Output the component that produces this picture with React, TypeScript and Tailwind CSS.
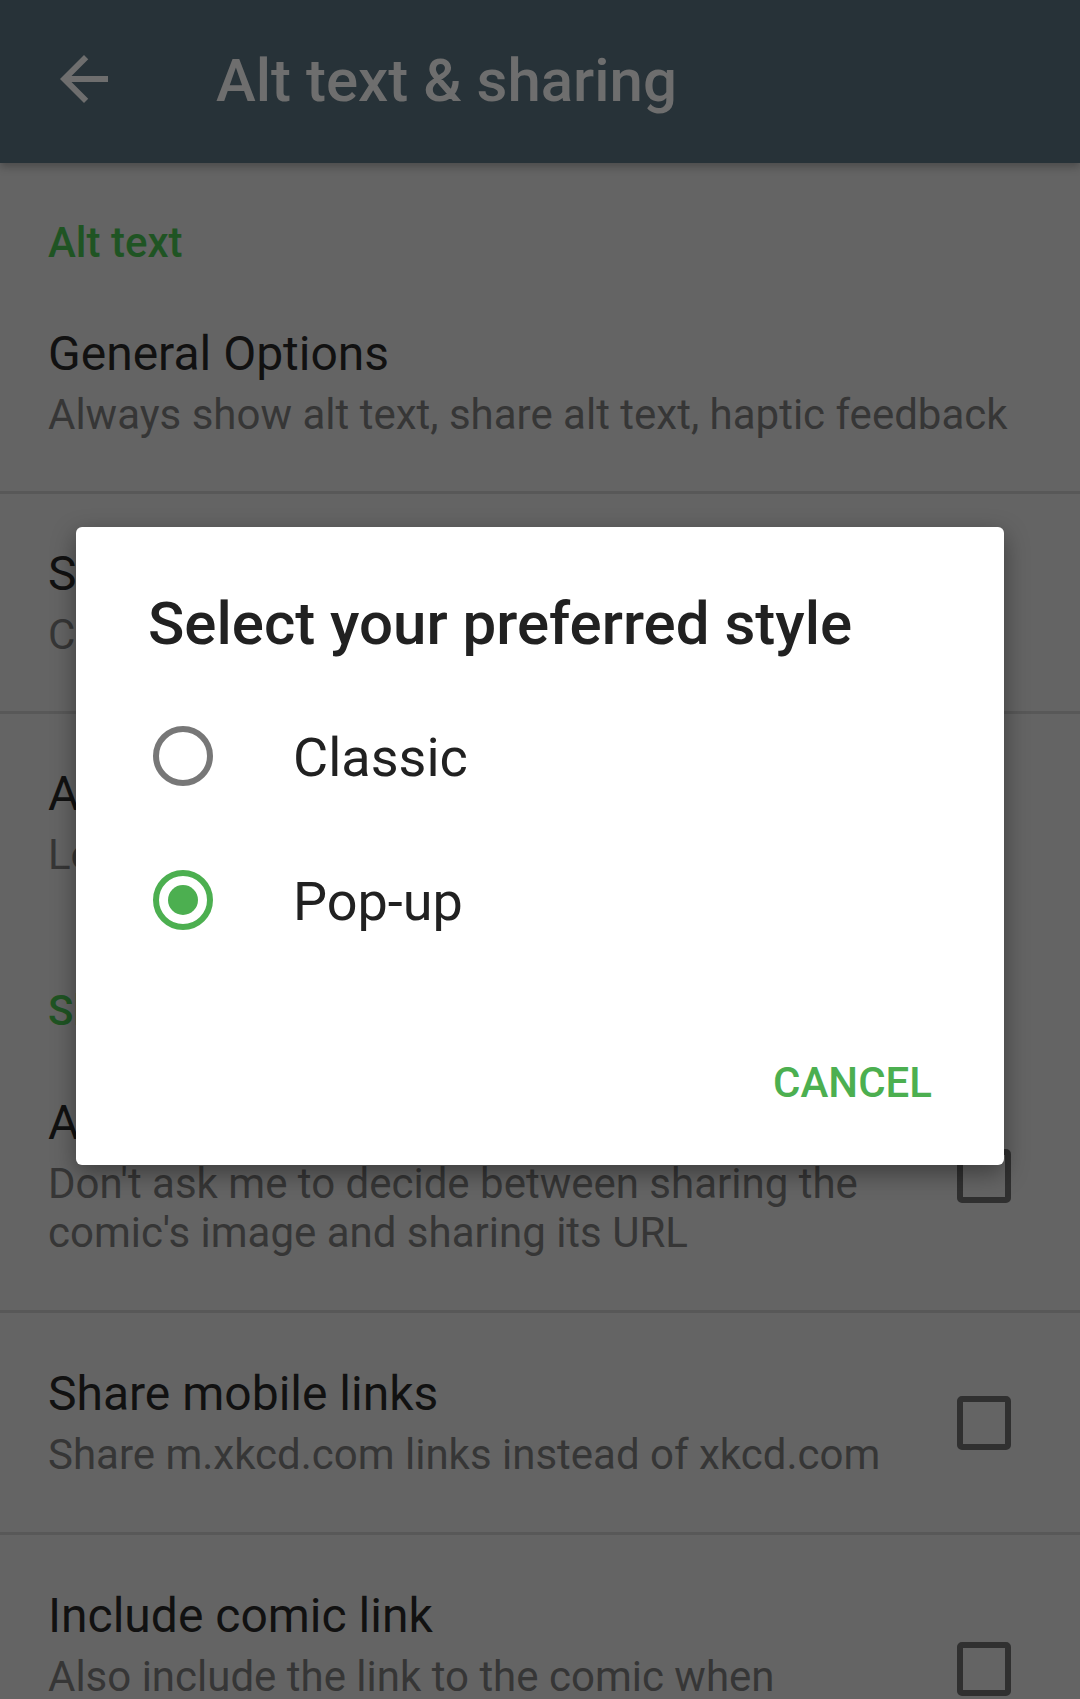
import React from "react";

const BackArrow = () => (
  <svg className="w-[72px] h-[72px]" viewBox="0 0 24 24" fill="#6e6e6e">
    <path d="M20 11H7.83l5.59-5.59L12 4l-8 8 8 8 1.41-1.41L7.83 13H20v-2z" />
  </svg>
);

const Checkbox = () => (
  <div className="w-[54px] h-[54px] shrink-0 rounded-[5px] border-[6px] border-[#303030]" />
);

function Category({ label }: { label: string }) {
  return (
    <div className="px-[48px] pt-[55px] pb-[7px] text-[42px] leading-[49px] font-medium text-[#1f5423]">
      {label}
    </div>
  );
}

function Pref({
  title,
  summary,
  checkbox,
  divider = true,
}: {
  title: string;
  summary: string;
  checkbox?: boolean;
  divider?: boolean;
}) {
  return (
    <div className={divider ? "border-b-[3px] border-[#585858]" : ""}>
      <div
        className={
          checkbox
            ? "flex items-center pl-[48px] pr-[69px] py-[53px]"
            : "flex items-center pl-[48px] pr-[24px] py-[52px]"
        }
      >
        <div className={checkbox ? "flex-1 pr-[48px]" : "flex-1"}>
          <div className="text-[48px] leading-[56px] text-[#111111]">{title}</div>
          <div className="mt-[8px] text-[42px] leading-[49px] text-[#363636]">{summary}</div>
        </div>
        {checkbox && <Checkbox />}
      </div>
    </div>
  );
}

function Radio({ checked }: { checked?: boolean }) {
  return checked ? (
    <div className="w-[60px] h-[60px] shrink-0 rounded-full border-[6px] border-[#4caf50] flex items-center justify-center">
      <div className="w-[30px] h-[30px] rounded-full bg-[#4caf50]" />
    </div>
  ) : (
    <div className="w-[60px] h-[60px] shrink-0 rounded-full border-[6px] border-[#777777]" />
  );
}

export default function App() {
  return (
    <div className="relative w-[1080px] h-[1699px] overflow-hidden bg-[#646464] font-['Roboto',sans-serif]">
      {/* Toolbar */}
      <header className="relative z-10 h-[163px] bg-[#273238] flex items-start shadow-[0_4px_8px_rgba(0,0,0,0.25)]">
        <div className="ml-[48px] mt-[43px]">
          <BackArrow />
        </div>
        <h1 className="ml-[96px] mt-[46px] text-[60px] leading-[70px] font-medium text-[#6e6e6e]">
          Alt text &amp; sharing
        </h1>
      </header>

      {/* Preference list */}
      <div>
        <Category label="Alt text" />
        <Pref
          title="General Options"
          summary="Always show alt text, share alt text, haptic feedback"
        />
        <Pref title="Style" summary="Choose how alt text is shown" />
        <Pref title="Alt text font" summary="Lets you pick the font" divider={false} />
        <Category label="Sharing" />
        <Pref
          title="Always share image"
          summary="Don't ask me to decide between sharing the comic's image and sharing its URL"
          checkbox
        />
        <Pref
          title="Share mobile links"
          summary="Share m.xkcd.com links instead of xkcd.com"
          checkbox
        />
        <Pref
          title="Include comic link"
          summary="Also include the link to the comic when sharing the image"
          checkbox
        />
      </div>

      {/* Dialog */}
      <div className="absolute left-[76px] top-[527px] w-[928px] h-[638px] bg-white rounded-[6px] shadow-[0_8px_24px_rgba(0,0,0,0.4)] flex flex-col">
        <h2 className="pt-[62px] px-[72px] text-[60px] leading-[70px] font-medium text-[#212121]">
          Select your preferred style
        </h2>
        <div className="mt-[25px]">
          <div className="h-[144px] flex items-center pl-[77px]">
            <Radio />
            <span className="ml-[80px] pt-[4px] text-[54px] leading-[64px] text-[#212121]">Classic</span>
          </div>
          <div className="h-[144px] flex items-center pl-[77px]">
            <Radio checked />
            <span className="ml-[80px] pt-[4px] text-[54px] leading-[64px] text-[#212121]">Pop-up</span>
          </div>
        </div>
        <div className="mt-auto flex justify-end pr-[72px] pb-[58px]">
          <span className="text-[42px] leading-[49px] font-medium text-[#4caf50]">CANCEL</span>
        </div>
      </div>
    </div>
  );
}
